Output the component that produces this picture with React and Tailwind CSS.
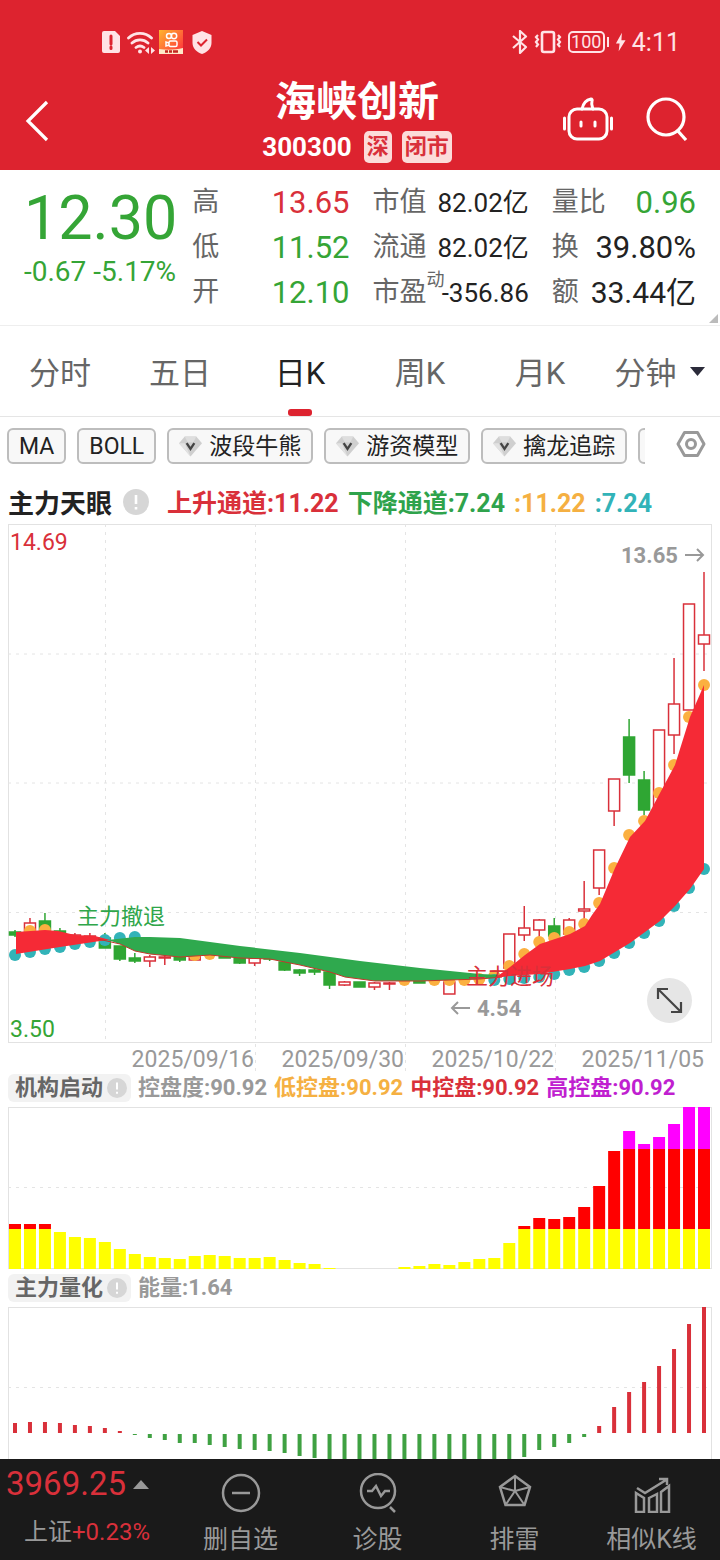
import React from 'react';

const LAST = 46;
const cx = (i) => 7 + (i * 689) / LAST;

const RED = '#d9303a';
const GREEN = '#2fa633';
const ORANGE = '#fbb040';
const TEAL = '#32b3b8';

// [index, high, bodyTop, bodyBottom, low, up]
const candles = [
  [0, 406, 408, 411, 413, false],
  [1, 394, 399, 408, 408, true],
  [2, 389, 397, 406, 406, false],
  [3, 404, 407, 411, 411, false],
  [4, 409, 411, 413, 413, true],
  [5, 409, 412, 414, 416, true],
  [6, 409, 414, 424, 424, false],
  [7, 422, 422, 435, 437, false],
  [8, 429, 434, 437, 439, false],
  [9, 431, 433, 437, 443, true],
  [10, 430, 433, 434, 441, true],
  [11, 432, 433, 436, 438, false],
  [12, 431, 432, 436, 436, true],
  [14, 430, 431, 434, 434, false],
  [15, 433, 434, 439, 440, false],
  [16, 433, 434, 439, 442, true],
  [17, 433, 433, 435, 437, false],
  [18, 437, 438, 446, 447, false],
  [19, 445, 446, 449, 452, false],
  [20, 443, 446, 448, 451, false],
  [21, 448, 448, 461, 465, false],
  [22, 457, 458, 461, 462, true],
  [23, 458, 458, 463, 463, false],
  [24, 458, 459, 463, 466, true],
  [25, 458, 459, 460, 466, true],
  [27, 456, 457, 459, 459, false],
  [29, 457, 458, 470, 470, true],
  [33, 410, 410, 444, 444, true],
  [34, 382, 404, 411, 417, true],
  [35, 395, 396, 406, 413, true],
  [36, 394, 402, 412, 414, false],
  [37, 394, 396, 410, 410, true],
  [38, 357, 385, 387, 401, true],
  [39, 326, 326, 364, 371, true],
  [40, 255, 255, 287, 302, true],
  [41, 195, 213, 251, 259, false],
  [42, 247, 256, 286, 291, false],
  [43, 206, 206, 286, 286, true],
  [44, 134, 180, 211, 230, true],
  [45, 80, 80, 186, 186, true],
  [46, 48, 111, 120, 147, true],
];

const orangeDots = [
  [1, 407], [2, 406], [12, 431], [13, 430], [26, 456], [28, 456], [29, 456], [30, 456], [31, 455], [32, 452],
  [33, 442], [34, 430], [35, 418], [36, 414], [37, 408], [38, 400], [39, 379], [40, 344],
  [41, 311], [42, 297], [43, 269], [44, 241], [45, 193], [46, 161],
];

const tealDots = [
  [0, 431], [1, 428], [2, 425], [3, 423], [4, 420], [5, 418], [6, 416], [7, 414], [8, 413],
  [32, 456], [33, 455], [34, 454], [35, 453], [36, 450], [37, 446], [38, 443], [39, 437], [40, 429], [41, 419],
  [42, 409], [43, 397], [44, 382], [45, 364], [46, 345],
];

const dates = [
  [246, '2025/09/16'],
  [396, '2025/09/30'],
  [546, '2025/10/22'],
  [696, '2025/11/05'],
];

const control = [
  45, 45, 45, 37, 32, 31, 27, 20, 15, 12, 11, 10, 13, 14, 13, 11, 11, 12, 9, 6, 5, 1, 0, 0, 0, 0, 2, 3, 5, 4,
  7, 10, 11, 26, 43, 51, 50, 52, 62, 83, 118, 138, 125, 132, 145, 162, 162,
];

const energy = [
  10, 11, 11, 10, 8, 7, 5, 2, -1, -4, -6, -9, -9, -11, -13, -15, -16, -17, -19, -22, -24, -27, -30, -32, -34,
  -36, -38, -39, -39, -38, -36, -34, -31, -28, -23, -16, -13, -9, -3, 7, 26, 41, 51, 67, 84, 109, 126,
];

const StatusBar = () => (
  <div className="flex items-center justify-between h-[84px] pl-[102px] pr-10 text-[#ffe3e6]">
    <div className="flex items-center gap-[7px]">
      <svg width="18" height="22" viewBox="0 0 18 22">
        <path d="M2 0h11l5 5v15a2 2 0 0 1-2 2H2a2 2 0 0 1-2-2V2a2 2 0 0 1 2-2z" fill="currentColor" />
        <path d="M9 5v8M9 16v1.500" stroke="#dd232f" strokeWidth="3" strokeLinecap="round" />
      </svg>
      <svg width="28" height="23" viewBox="0 0 28 23" fill="none" stroke="currentColor" strokeWidth="2.800" strokeLinecap="round">
        <path d="M1.500 7a16.500 16.500 0 0 1 23 0M5 12a12 12 0 0 1 16 0M9 16.500a6.500 6.500 0 0 1 8 0" />
        <circle cx="13" cy="20.500" r="2" fill="currentColor" stroke="none" />
        <path d="M22 16v7l-4-3.500zM24 16v7l4-3.500z" fill="currentColor" stroke="none" />
      </svg>
      <svg className="-ml-[3px]" width="24" height="24" viewBox="0 0 24 24">
        <defs>
          <linearGradient id="appIcon" x1="0" y1="0" x2="1" y2="1">
            <stop offset="0" stopColor="#ffb52e" />
            <stop offset="1" stopColor="#ff2b3d" />
          </linearGradient>
        </defs>
        <rect width="24" height="24" fill="url(#appIcon)" />
        <g fill="none" stroke="#fff" strokeWidth="1.500">
          <circle cx="10" cy="6" r="2.500" />
          <circle cx="15" cy="6" r="2.700" />
          <rect x="10" y="11" width="8" height="5.500" rx="1.500" />
          <path d="M10 13l-3-1v4l3-1" />
        </g>
        <path d="M0 19c8 1 16 1 24-1v6H0z" fill="#ffe9c8" />
        <path d="M6 21.500h3m1 0h3m1 0h5" stroke="#c2261f" strokeWidth="2.500" />
      </svg>
      <svg className="ml-[2px]" width="20" height="23" viewBox="0 0 20 23">
        <path d="M10 0l9.500 4v8c0 5-4 9-9.500 11C4.500 21 .5 17 .5 12V4z" fill="currentColor" />
        <path d="M5.500 11l3.500 3.500 6-6" fill="none" stroke="#dd232f" strokeWidth="2" />
      </svg>
    </div>
    <div className="flex items-center gap-[6px]">
      <svg width="16" height="24" viewBox="0 0 16 24" fill="none" stroke="currentColor" strokeWidth="2.200" strokeLinejoin="round">
        <path d="M1 6l13 11-6 6V1l6 5.500L1 18" />
      </svg>
      <svg width="28" height="24" viewBox="0 0 28 24" fill="none" stroke="currentColor" strokeWidth="2.200">
        <rect x="8" y="2" width="12" height="20" rx="2" strokeWidth="2.600" />
        <path d="M4 5l-2 2 2 2.500-2 2.500 2 2.500-2 2.500M24 5l2 2-2 2.500 2 2.500-2 2.500 2 2.500" />
      </svg>
      <div className="flex items-center gap-[2px]">
        <span className="flex items-center justify-center w-[37px] h-[22px] border-2 rounded-[5px] text-[18px] leading-none">100</span>
        <span className="w-[2px] h-[10px] bg-[#ffe3e6]" />
      </div>
      <svg width="11" height="20" viewBox="0 0 12 20" fill="currentColor">
        <path d="M7.500 0L1 11.500h4L4 20l7.500-12H7z" />
      </svg>
      <span className="text-[25px] leading-none">4:11</span>
    </div>
  </div>
);

const Header = () => (
  <header className="bg-[#dd232f] text-white">
    <StatusBar />
    <div className="relative flex items-center justify-between h-[86px] pl-6 pr-8">
      <button aria-label="返回" className="pb-3">
        <svg width="26" height="42" viewBox="0 0 26 42" fill="none" stroke="currentColor" strokeWidth="3.200">
          <path d="M23 2L4 21l19 19" />
        </svg>
      </button>
      <div className="absolute inset-x-0 top-0 flex flex-col items-center pr-[6px] pointer-events-none">
        <h1 className="text-[41px] leading-[36px] font-bold">海峡创新</h1>
        <div className="flex items-center gap-[10px] pt-[11px]">
          <span className="text-[26px] leading-8 font-bold pr-[2px]">300300</span>
          <span className="h-8 px-[3px] rounded-[5px] bg-[#fcdcda] text-[#d9303a] text-[22px] leading-8 font-bold">深</span>
          <span className="h-8 px-[3px] rounded-[5px] bg-[#fcdcda] text-[#d9303a] text-[22px] leading-8 font-bold">闭市</span>
        </div>
      </div>
      <div className="flex items-center gap-[33px] pb-4">
        <button aria-label="智能助手">
          <svg width="50" height="44" viewBox="0 0 50 44" fill="none" stroke="currentColor" strokeWidth="3" strokeLinecap="round">
            <rect x="6" y="12" width="38" height="30" rx="8" />
            <path d="M19 12c1-5 4-9 9-10 1 0 1.500 1 1 2-1 3 0 5 1 8" />
            <path d="M1.500 21v11M48.500 21v11M18 25v4M32 25v4" />
          </svg>
        </button>
        <button aria-label="搜索">
          <svg width="42" height="44" viewBox="0 0 42 44" fill="none" stroke="currentColor" strokeWidth="3.200">
            <circle cx="20" cy="20" r="18" />
            <path d="M31 33l9 10" />
          </svg>
        </button>
      </div>
    </div>
  </header>
);

const Stat = ({ label, note, value, className }) => (
  <div className="flex items-center justify-between h-[45px] whitespace-nowrap leading-none">
    <dt className="flex items-center text-[27px] text-[#666]">
      {label}
      {note && <sup className="self-start -mr-2 text-[18px] leading-none -top-2">{note}</sup>}
    </dt>
    <dd className={className}>{value}</dd>
  </div>
);

const Quote = () => (
  <section className="relative grid grid-cols-[minmax(0,145fr)_minmax(0,157fr)_minmax(0,156fr)_minmax(0,144fr)] gap-x-[23px] h-[156px] px-6 pt-[10px] border-b border-[#eee]">
    <div className="whitespace-nowrap text-[#35a536]">
      <div className="text-[61px] leading-[76px]">12.30</div>
      <div className="text-[28px] leading-8">-0.67 -5.17%</div>
    </div>
    <dl>
      <Stat label="高" value="13.65" className="text-[31px] text-[#d9303a]" />
      <Stat label="低" value="11.52" className="text-[31px] text-[#35a536]" />
      <Stat label="开" value="12.10" className="text-[31px] text-[#35a536]" />
    </dl>
    <dl>
      <Stat label="市值" value="82.02亿" className="text-[26px] text-[#222]" />
      <Stat label="流通" value="82.02亿" className="text-[26px] text-[#222]" />
      <Stat label="市盈" note="动" value="-356.86" className="text-[26px] text-[#222]" />
    </dl>
    <dl>
      <Stat label="量比" value="0.96" className="text-[31px] text-[#35a536]" />
      <Stat label="换" value="39.80%" className="text-[31px] text-[#222]" />
      <Stat label="额" value="33.44亿" className="text-[30px] text-[#222]" />
    </dl>
    <svg className="absolute right-[2px] bottom-[2px]" width="9" height="9" viewBox="0 0 9 9">
      <path d="M9 0v9H0z" fill="#bbb" />
    </svg>
  </section>
);

const Tabs = () => (
  <nav className="flex h-[91px] border-b border-[#e5e5e5]">
    {['分时', '五日', '日K', '周K', '月K', '分钟'].map((t) => (
      <button
        key={t}
        className={`relative flex flex-1 items-center justify-center gap-3 pt-1 text-[31px] leading-none ${t === '日K' ? 'text-[#222]' : 'text-[#666]'}`}
      >
        {t}
        {t === '分钟' && (
          <svg className="mb-1" width="17" height="9" viewBox="0 0 17 9">
            <path d="M1 0h15L8.500 9z" fill="#2b2b3a" />
          </svg>
        )}
        {t === '日K' && <span className="absolute bottom-0 w-6 h-[7px] rounded-[3px] bg-[#dd232f]" />}
      </button>
    ))}
  </nav>
);

const Gem = () => (
  <svg width="23" height="22" viewBox="0 0 24 22">
    <path d="M6 1h12l6 7-12 14L0 8z" fill="#cfcfcf" />
    <path d="M6 1h12l-3 6H9z" fill="#dedede" />
    <path d="M0 8h6l6 14z" fill="#e2e2e2" />
    <path d="M8 8l4 6 4-6" fill="none" stroke="#444" strokeWidth="2.400" />
  </svg>
);

const chipClass =
  'flex shrink-0 items-center gap-[7px] h-9 px-[10px] border-2 border-[#bdbdbd] rounded-md bg-[#f8f8f8] text-[23px] leading-none text-[#222] whitespace-nowrap';

const Indicators = () => (
  <div className="flex items-center justify-between py-[11px] pl-[7px] pr-[14px]">
    <div className="flex flex-1 gap-[11px] mr-[31px] overflow-hidden">
      <button className={chipClass}>MA</button>
      <button className={chipClass}>BOLL</button>
      <button className={chipClass}><Gem />波段牛熊</button>
      <button className={chipClass}><Gem />游资模型</button>
      <button className={chipClass}><Gem />擒龙追踪</button>
      <button aria-label="更多指标" className={chipClass} />
    </div>
    <button aria-label="设置" className="pb-1">
      <svg width="30" height="26" viewBox="0 0 30 26" fill="none" stroke="#999" strokeWidth="3">
        <path d="M8.500 1.500h13L28 13l-6.500 11.500h-13L2 13z" strokeLinejoin="round" />
        <circle cx="15" cy="13" r="4.500" />
      </svg>
    </button>
  </div>
);

const Info = ({ size }) => (
  <svg width={size} height={size} viewBox="0 0 26 26">
    <circle cx="13" cy="13" r="13" fill="#d6d6d6" />
    <path d="M13 6v9M13 18v2.500" stroke="#fff" strokeWidth="2.600" />
  </svg>
);

const Candle = ({ data }) => {
  const [i, high, top, bottom, low, up] = data;
  const x = cx(i);
  const color = up ? RED : GREEN;
  return (
    <g stroke={color} strokeWidth="1.500">
      {high < top && <path d={`M${x} ${high}V${top}`} />}
      {low > bottom && <path d={`M${x} ${bottom}V${low}`} />}
      <rect x={x - 5.5} y={top} width="11" height={bottom - top} fill={up ? '#fff' : color} />
    </g>
  );
};

const Dots = ({ list, color }) => list.map(([i, y]) => <circle key={i} cx={cx(i)} cy={y} r="6" fill={color} />);

const KLine = () => (
  <div className="relative">
    <svg className="block w-full" viewBox="0 0 704 549">
      <rect x="0.500" y="0.500" width="703" height="518" fill="none" stroke="#e2e2e2" />
      <g stroke="#e4e4e4" strokeDasharray="3 5">
        <path d="M0 130H704M0 259H704M0 388.500H704" />
        <path d="M97.500 0V518M247.500 0V549M397.500 0V549M547.500 0V549" />
      </g>
      {candles.map((c) => <Candle key={c[0]} data={c} />)}
      <Dots list={orangeDots} color={ORANGE} />
      <Dots list={tealDots} color={TEAL} />
      <path d="M8 408L37 406 50 407 67 411 87 412 102 416 92 417 52 423 8 430z" fill="#f52a36" />
      <path
        d="M100 416L127 413 142 413 172 414 202 418 232 422 292 429 352 437 412 444 472 450 494 451 494 453 472 455 412 457 367 457 337 453 322 448 292 441 262 435 232 434 202 431 172 433 142 430 127 427 112 420z"
        fill="#2fa94e"
      />
      <path
        d="M90 415L112 420 127 427 142 430 172 433 202 431 232 434 262 435 292 441 322 448 337 453 367 457 412 457 472 455 494 453"
        fill="none"
        stroke="#c0392b"
      />
      <path
        d="M487 454L502 443 517 431 532 420 547 415 562 410 577 402 584 391 592 380 607 344 622 313 637 297 652 269 667 241 682 193 696 161V345L682 365 667 382 652 397 637 408 622 419 607 428 592 437 577 442 562 445 532 450 502 452z"
        fill="#f52a36"
      />
      <text x="69" y="400" fontSize="22" fill="#2fa64a">主力撤退</text>
      <text x="458" y="460" fontSize="22" fill={RED}>主力进场</text>
      <text x="2" y="26" fontSize="23" fill={RED}>14.69</text>
      <text x="2" y="513" fontSize="23" fill="#35a536">3.50</text>
      <g fontSize="22" fontWeight="bold" fill="#999">
        <text x="613" y="39">13.65</text>
        <text x="469" y="492">4.54</text>
      </g>
      <g fill="none" stroke="#999" strokeWidth="2">
        <path d="M677 31h18M689 25l6 6-6 6" />
        <path d="M462 484h-18M450 478l-6 6 6 6" />
      </g>
      <g fontSize="23" fill="#999" textAnchor="end">
        {dates.map(([x, d]) => <text key={d} x={x} y="543">{d}</text>)}
      </g>
    </svg>
    <button
      aria-label="全屏"
      className="absolute right-5 bottom-[50px] flex items-center justify-center w-[45px] h-[45px] rounded-full bg-[#e6e6e6]"
    >
      <svg width="27" height="27" viewBox="0 0 27 27" fill="none" stroke="#444" strokeWidth="2.200">
        <path d="M2 2l23 23M2 12V2h10M15 25h10V15" />
      </svg>
    </button>
  </div>
);

const SubHeader = ({ title, className, children }) => (
  <div className={`flex items-center h-[28px] gap-[7px] mb-[5px] text-[22px] leading-none font-bold whitespace-nowrap ${className}`}>
    <h2 className="flex items-center gap-1 h-full pl-[7px] pr-1 rounded-md bg-[#f2f2f2] text-[#666]">
      {title}
      <Info size={20} />
    </h2>
    {children}
  </div>
);

const ControlChart = () => (
  <svg className="block w-full" viewBox="0 0 704 162">
    <rect x="0.500" y="0.500" width="703" height="161" fill="none" stroke="#e2e2e2" />
    <path d="M0 80.500H704" stroke="#e4e4e4" strokeDasharray="3 5" />
    {control.map((v, i) => (
      <g key={i}>
        {v > 120 && <rect x={cx(i) - 6} y={162 - v} width="12" height={v - 120} fill="#ff00ff" />}
        {v > 40 && <rect x={cx(i) - 6} y={162 - Math.min(v, 120)} width="12" height={Math.min(v, 120) - 40} fill="#ff0000" />}
        <rect x={cx(i) - 6} y={162 - Math.min(v, 40)} width="12" height={Math.min(v, 40)} fill="#ffff00" />
      </g>
    ))}
  </svg>
);

const EnergyChart = () => (
  <svg className="block w-full" viewBox="0 0 704 204">
    <rect x="0.500" y="0.500" width="703" height="203" fill="none" stroke="#e2e2e2" />
    <path d="M0 80.500H704" stroke="#e4e4e4" strokeDasharray="3 5" />
    {energy.map((v, i) => (
      <rect
        key={i}
        x={cx(i) - 2}
        y={v > 0 ? 126 - v : 127}
        width="4"
        height={Math.abs(v)}
        fill={v > 0 ? RED : '#3fa142'}
      />
    ))}
  </svg>
);

const NavItem = ({ label, children }) => (
  <button className="flex flex-1 flex-col items-center gap-[14px] pt-[14px] text-[25px] leading-none text-[#999] whitespace-nowrap">
    <svg width="40" height="40" viewBox="0 0 40 40" fill="none" stroke="currentColor" strokeWidth="2.500">
      {children}
    </svg>
    {label}
  </button>
);

const BottomBar = () => (
  <footer className="flex shrink-0 h-[101px] bg-[#1a1a1a]">
    <div className="w-[172px] pl-[6px] pt-2 whitespace-nowrap text-[#d9303a]">
      <div className="flex items-center gap-[7px] text-[33px] leading-[34px]">
        3969.25
        <svg width="16" height="9" viewBox="0 0 16 9">
          <path d="M8 0l8 9H0z" fill="#999" />
        </svg>
      </div>
      <div className="flex items-center pl-[18px] pt-[14px] text-[24px] leading-[34px]">
        <span className="text-[#999]">上证</span>
        +0.23%
      </div>
    </div>
    <NavItem label="删自选">
      <circle cx="20" cy="20" r="18" />
      <path d="M11 20h18" />
    </NavItem>
    <NavItem label="诊股">
      <circle cx="20" cy="18" r="17" />
      <path d="M9 18h5l4-5 5 10 4-5h5M32 34l5 5" />
    </NavItem>
    <NavItem label="排雷">
      <path d="M20 3l15 11-5.500 18h-19L5 14z" />
      <path d="M20 3v15M35 14l-15 4M29.500 32L20 18M10.500 32L20 18M5 14l15 4" strokeWidth="2" />
    </NavItem>
    <NavItem label="相似K线">
      <path d="M4 20l8 5v14H4zM17 25l8-4v18h-8zM29 19l8-6v26h-8z" />
      <path d="M5 15l8 5L34 7M27 6h8v6" />
    </NavItem>
  </footer>
);

const App = () => (
  <div className="flex flex-col h-screen overflow-hidden bg-white font-[Roboto,'Noto_Sans_CJK_SC',sans-serif]">
    <Header />
    <main className="flex-1 min-h-0 overflow-hidden">
      <Quote />
      <Tabs />
      <Indicators />
      <div className="px-2">
        <div className="flex items-center h-[49px] pt-2 text-[25px] leading-none font-bold whitespace-nowrap">
          <h2 className="text-[26px] text-[#222]">主力天眼</h2>
          <span className="pl-[11px] pr-[18px] pb-1"><Info size={26} /></span>
          <div className="flex gap-[9px]">
            <span className="text-[#d9303a]">上升通道:11.22</span>
            <span className="text-[#2fa34c]">下降通道:7.24</span>
            <span className="text-[#f5b042]">:11.22</span>
            <span className="text-[#32b3b8]">:7.24</span>
          </div>
        </div>
        <KLine />
        <SubHeader title="机构启动" className="mt-px">
          <span className="text-[#999]">控盘度:90.92</span>
          <span className="text-[#f5b042]">低控盘:90.92</span>
          <span className="text-[#d9303a]">中控盘:90.92</span>
          <span className="text-[#c01fd0]">高控盘:90.92</span>
        </SubHeader>
        <ControlChart />
        <SubHeader title="主力量化" className="mt-[5px]">
          <span className="text-[#999]">能量:1.64</span>
        </SubHeader>
        <EnergyChart />
      </div>
    </main>
    <BottomBar />
  </div>
);

export default App;
